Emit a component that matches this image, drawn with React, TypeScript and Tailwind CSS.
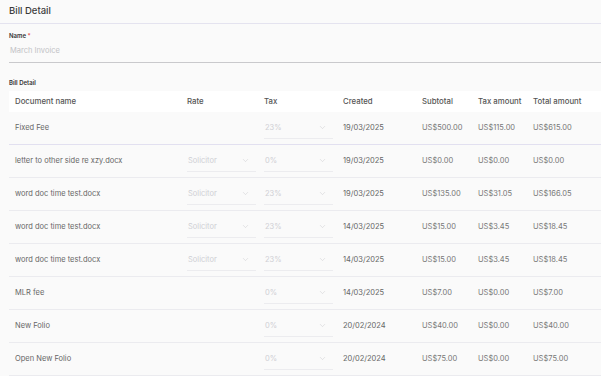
import { ChevronDown } from "lucide-react";

type Row = {
  name: string;
  rate: string | null;
  tax: string;
  created: string;
  subtotal: string;
  taxAmount: string;
  total: string;
};

const rows: Row[] = [
  { name: "Fixed Fee", rate: null, tax: "23%", created: "19/03/2025", subtotal: "US$500.00", taxAmount: "US$115.00", total: "US$615.00" },
  { name: "letter to other side re xzy.docx", rate: "Solicitor", tax: "0%", created: "19/03/2025", subtotal: "US$0.00", taxAmount: "US$0.00", total: "US$0.00" },
  { name: "word doc time test.docx", rate: "Solicitor", tax: "23%", created: "19/03/2025", subtotal: "US$135.00", taxAmount: "US$31.05", total: "US$166.05" },
  { name: "word doc time test.docx", rate: "Solicitor", tax: "23%", created: "14/03/2025", subtotal: "US$15.00", taxAmount: "US$3.45", total: "US$18.45" },
  { name: "word doc time test.docx", rate: "Solicitor", tax: "23%", created: "14/03/2025", subtotal: "US$15.00", taxAmount: "US$3.45", total: "US$18.45" },
  { name: "MLR fee", rate: null, tax: "0%", created: "14/03/2025", subtotal: "US$7.00", taxAmount: "US$0.00", total: "US$7.00" },
  { name: "New Folio", rate: null, tax: "0%", created: "20/02/2024", subtotal: "US$40.00", taxAmount: "US$0.00", total: "US$40.00" },
  { name: "Open New Folio", rate: null, tax: "0%", created: "20/02/2024", subtotal: "US$75.00", taxAmount: "US$0.00", total: "US$75.00" },
];

const cols = "grid grid-cols-[171px_79px_78px_79px_56px_55px_1fr]";

function Select({ value }: { value: string }) {
  return (
    <div className="flex h-[22px] w-[69px] items-center justify-between border-b border-[#ececef] pl-[1px] pr-[6px] text-[#cfcfd4]">
      <span>{value}</span>
      <ChevronDown size={9} strokeWidth={1.3} className="text-[#c9c9ce]" />
    </div>
  );
}

export default function App() {
  return (
    <div
      className="h-[376px] w-[601px] overflow-hidden bg-[#fafafa] text-[#555]"
      style={{ fontFamily: "Inter, 'Noto Sans', sans-serif" }}
    >
      <div className="flex h-[24px] items-center border-b border-[#e4e3ef] px-[9px] text-[9.5px] font-medium text-[#3a3a3a]">
        Bill Detail
      </div>

      <div className="pl-[9px]">
        <div className="pt-[8px] text-[6px] font-semibold leading-[8px] text-[#333]">
          Name <span className="text-[#e53935]">*</span>
        </div>
        <div className="flex h-[23px] items-center border-b border-[#c9c9cc] pl-[1px] text-[7.5px] text-[#c2c2c6]">
          March Invoice
        </div>

        <div className="pt-[16px] text-[6px] font-semibold leading-[8px] text-[#333]">
          Bill Detail
        </div>

        <div className="mt-[4px]">
          <div className={`${cols} h-[21px] items-center bg-white text-[7.8px] font-medium text-[#555]`}>
            <div className="pl-[6px]">Document name</div>
            <div className="pl-[7px]">Rate</div>
            <div className="pl-[5px]">Tax</div>
            <div className="pl-[6px]">Created</div>
            <div className="pl-[6px]">Subtotal</div>
            <div className="pl-[6px]">Tax amount</div>
            <div className="pl-[6px]">Total amount</div>
          </div>
          {rows.map((row, i) => (
            <div
              key={i}
              className={`${cols} h-[33px] items-center border-b text-[7.5px] ${i === 0 ? "border-[#e2e0f0]" : "border-[#ebebef]"}`}
            >
              <div className="pl-[6px] text-[#666]">{row.name}</div>
              <div className="pl-[7px]">{row.rate && <Select value={row.rate} />}</div>
              <div className="pl-[5px]">
                <Select value={row.tax} />
              </div>
              <div className="pl-[6px] text-[#666]">{row.created}</div>
              <div className="pl-[6px] text-[#777]">{row.subtotal}</div>
              <div className="pl-[6px] text-[#777]">{row.taxAmount}</div>
              <div className="pl-[6px] text-[#777]">{row.total}</div>
            </div>
          ))}
        </div>
      </div>
    </div>
  );
}
